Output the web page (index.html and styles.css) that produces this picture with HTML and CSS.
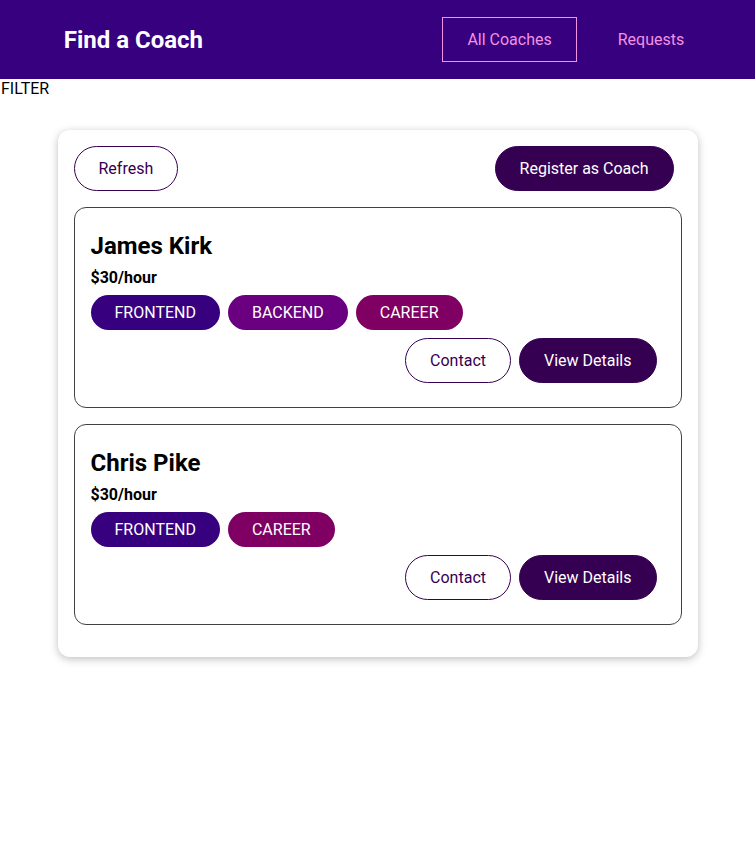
FILE: index.html
```
<!DOCTYPE html>
<html lang="en">
<head>
<meta charset="utf-8">
<title>Find a Coach</title>
<link rel="stylesheet" href="styles.css">
</head>
<body>
<header class="site-header">
  <nav class="site-nav">
    <h1 class="brand"><a href="#" class="brand-link">Find a Coach</a></h1>
    <ul class="nav-list">
      <li class="nav-item"><a href="#" class="nav-link active">All Coaches</a></li>
      <li class="nav-item"><a href="#" class="nav-link">Requests</a></li>
    </ul>
  </nav>
</header>
<main>
  <section class="filter">FILTER</section>
  <section class="card">
    <div class="controls">
      <button class="btn btn-outline">Refresh</button>
      <a href="#" class="btn">Register as Coach</a>
    </div>
    <ul class="coach-list">
      <li class="coach">
        <h3 class="coach-name">James Kirk</h3>
        <h4 class="coach-rate">$30/hour</h4>
        <div class="badges">
          <span class="badge frontend">FRONTEND</span><span class="badge backend">BACKEND</span><span class="badge career">CAREER</span>
        </div>
        <div class="actions">
          <a href="#" class="btn btn-outline">Contact</a><a href="#" class="btn">View Details</a>
        </div>
      </li>
      <li class="coach">
        <h3 class="coach-name">Chris Pike</h3>
        <h4 class="coach-rate">$30/hour</h4>
        <div class="badges">
          <span class="badge frontend">FRONTEND</span><span class="badge career">CAREER</span>
        </div>
        <div class="actions">
          <a href="#" class="btn btn-outline">Contact</a><a href="#" class="btn">View Details</a>
        </div>
      </li>
    </ul>
  </section>
</main>
</body>
</html>
```
FILE: styles.css
```
* { box-sizing: border-box; }
html { font-family: "Roboto", "Liberation Sans", sans-serif; }
body { margin: 0; background: #fff; color: #000; }

.site-header {
  width: 100%;
  height: 79px;
  background-color: #37007f;
  display: flex;
  justify-content: center;
  align-items: center;
}
.site-nav {
  width: 90%;
  margin: auto;
  display: flex;
  justify-content: space-between;
  align-items: center;
}
.brand { margin: 0; font-size: 24px; font-weight: 700; }
.brand-link {
  color: #fff;
  text-decoration: none;
  display: inline-block;
  padding: 12px 25px;
  border: 1px solid transparent;
}
.nav-list {
  list-style: none;
  margin: 0;
  padding: 0;
  display: flex;
  justify-content: center;
  align-items: center;
}
.nav-item { margin: 0 8px; }
.nav-link {
  text-decoration: none;
  color: #f391e3;
  display: inline-block;
  padding: 12px 24px;
  border: 1px solid transparent;
  font-size: 16px;
}
.nav-link.active { border-color: #f391e3; }

.filter { padding-left: 1px; font-size: 16px; line-height: 19px; }

.card {
  border-radius: 12px;
  box-shadow: 0 2px 8px rgba(0,0,0,0.26);
  padding: 16px;
  margin: 32px auto;
  max-width: 640px;
  background: #fff;
}
.controls { display: flex; justify-content: space-between; }

.btn {
  text-decoration: none;
  padding: 12px 24px;
  font: inherit;
  font-size: 16px;
  line-height: 19px;
  background-color: #360052;
  border: 1px solid #360052;
  color: #fff;
  cursor: pointer;
  border-radius: 30px;
  margin-right: 8px;
  display: inline-block;
}
.btn-outline { background-color: transparent; color: #360052; }

.coach-list { list-style: none; margin: 0; padding: 0; }
.coach {
  margin: 16px 0;
  border: 1px solid #424242;
  border-radius: 12px;
  padding: 16px;
}
.coach-name { font-size: 24px; margin: 8px 0; line-height: 28px; font-weight: 700; }
.coach-rate { font-size: 16px; margin: 8px 0; line-height: 19px; font-weight: 700; }
.badges { margin: 8px 0; display: flex; }
.badge {
  border-radius: 30px;
  padding: 8px 24px;
  display: inline-block;
  margin-right: 8px;
  color: #fff;
  font-size: 16px;
  line-height: 19px;
}
.frontend { background-color: #37007f; }
.backend { background-color: #6a0080; }
.career { background-color: #7f0062; }
.actions { margin: 8px 0; display: flex; justify-content: flex-end; }
```
